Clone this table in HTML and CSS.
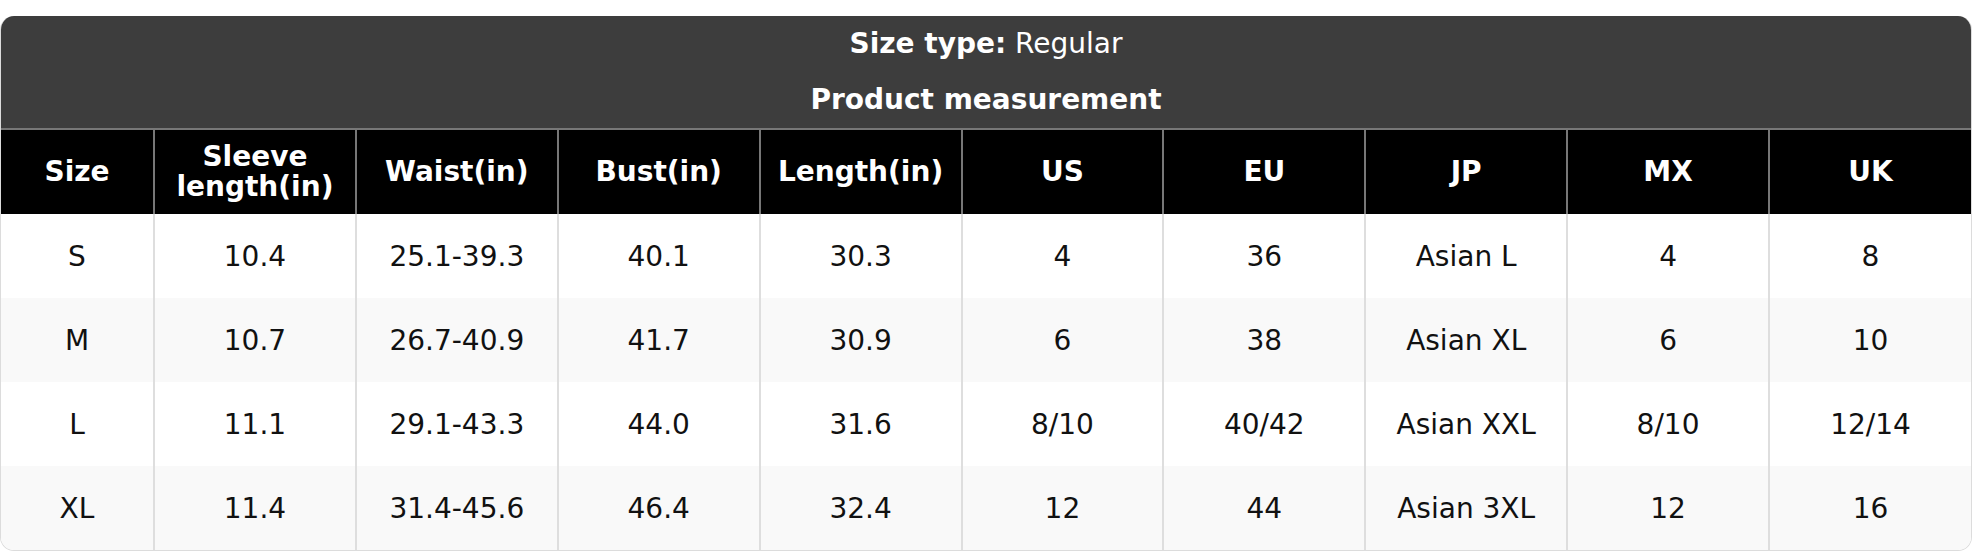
FILE: index.html
```html
<!DOCTYPE html>
<html>
<head>
<meta charset="utf-8">
<link rel="stylesheet" href="styles.css">
</head>
<body>
<div class="card">
  <div class="title">
    <div class="title-row"><b>Size type:</b>&nbsp;Regular</div>
    <div class="title-row"><b>Product measurement</b></div>
  </div>
  <table class="chart">
    <colgroup>
      <col class="col-first">
      <col><col><col><col><col><col><col><col><col>
    </colgroup>
    <thead>
      <tr>
        <th>Size</th>
        <th>Sleeve<br>length(in)</th>
        <th>Waist(in)</th>
        <th>Bust(in)</th>
        <th>Length(in)</th>
        <th>US</th>
        <th>EU</th>
        <th>JP</th>
        <th>MX</th>
        <th>UK</th>
      </tr>
    </thead>
    <tbody>
      <tr><td>S</td><td>10.4</td><td>25.1-39.3</td><td>40.1</td><td>30.3</td><td>4</td><td>36</td><td>Asian L</td><td>4</td><td>8</td></tr>
      <tr><td>M</td><td>10.7</td><td>26.7-40.9</td><td>41.7</td><td>30.9</td><td>6</td><td>38</td><td>Asian XL</td><td>6</td><td>10</td></tr>
      <tr><td>L</td><td>11.1</td><td>29.1-43.3</td><td>44.0</td><td>31.6</td><td>8/10</td><td>40/42</td><td>Asian XXL</td><td>8/10</td><td>12/14</td></tr>
      <tr><td>XL</td><td>11.4</td><td>31.4-45.6</td><td>46.4</td><td>32.4</td><td>12</td><td>44</td><td>Asian 3XL</td><td>12</td><td>16</td></tr>
    </tbody>
  </table>
</div>
</body>
</html>
```

FILE: styles.css
```css
html, body {
  margin: 0;
  padding: 0;
  background: #fff;
}
body {
  padding-top: 16px;
  font-family: "DejaVu Sans", Verdana, sans-serif;
  font-size: 28px;
  color: #111;
}
.card {
  width: 1972px;
  box-sizing: border-box;
  border: 1px solid #dcdcdc;
  border-top: none;
  border-radius: 14px;
  overflow: hidden;
}
.title {
  background: #3d3d3d;
  color: #fff;
  border-bottom: 1px solid #777;
}
.title-row {
  height: 56px;
  display: flex;
  align-items: center;
  justify-content: center;
  line-height: 1;
}
.title-row b {
  font-weight: bold;
}
.chart {
  width: 100%;
  border-collapse: separate;
  border-spacing: 0;
  table-layout: fixed;
}
.col-first {
  width: 153px;
}
.chart th {
  background: #000;
  color: #fff;
  font-weight: bold;
  height: 84px;
  padding: 0 4px;
  line-height: 1.08;
  border-top: 1px solid #777;
  border-left: 1px solid #777;
  border-right: 1px solid #777;
  text-align: center;
  vertical-align: middle;
}
.chart td {
  height: 84px;
  padding: 0 4px;
  text-align: center;
  vertical-align: middle;
  border-left: 1px solid #dedede;
  border-right: 1px solid #dedede;
  box-sizing: border-box;
}
.chart th:first-child,
.chart td:first-child {
  border-left: none;
}
.chart th:last-child,
.chart td:last-child {
  border-right: none;
}
.chart tbody tr:nth-child(even) td {
  background: #f9f9f9;
}
```
